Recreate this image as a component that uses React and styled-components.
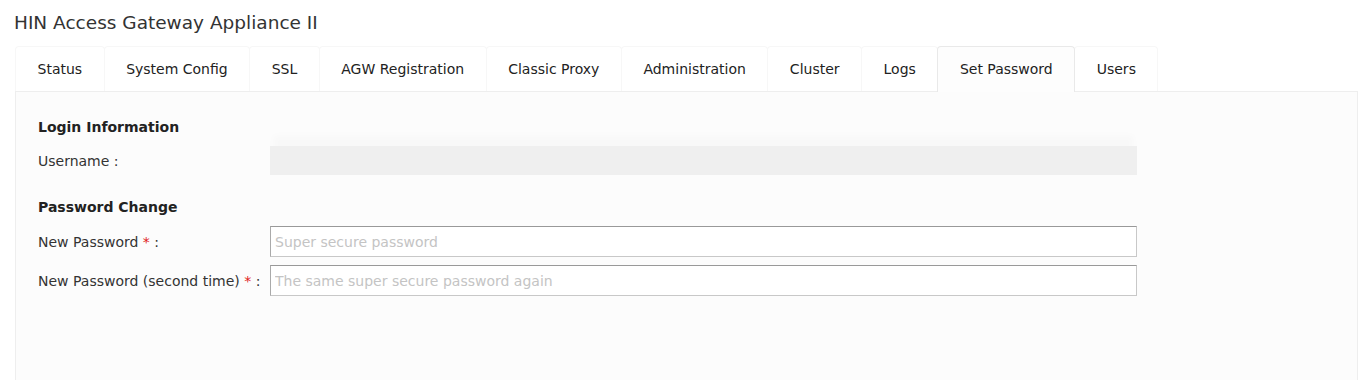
import styled, { createGlobalStyle } from 'styled-components'

const GlobalStyle = createGlobalStyle`
  body {
    margin: 0;
    background: #ffffff;
    font-family: "DejaVu Sans", Verdana, sans-serif;
    color: #333333;
  }
`

const tabs = [
  'Status',
  'System Config',
  'SSL',
  'AGW Registration',
  'Classic Proxy',
  'Administration',
  'Cluster',
  'Logs',
  'Set Password',
  'Users',
]

export default function App() {
  return (
    <>
      <GlobalStyle />
      <Page>
        <Title>HIN Access Gateway Appliance II</Title>
        <TabBar>
          {tabs.map((t) => (
            <Tab key={t} active={t === 'Set Password'}>{t}</Tab>
          ))}
        </TabBar>
        <Panel>
          <SectionTitle>Login Information</SectionTitle>
          <Row>
            <Label>Username :</Label>
            <Redacted />
          </Row>
          <SectionTitle spaced>Password Change</SectionTitle>
          <Row>
            <Label>New Password <Req>*</Req> :</Label>
            <Input type="password" placeholder="Super secure password" />
          </Row>
          <Row>
            <Label>New Password (second time) <Req>*</Req> :</Label>
            <Input type="password" placeholder="The same super secure password again" />
          </Row>
        </Panel>
      </Page>
    </>
  )
}

//------------------Styles------------------

const Page = styled.div`
  padding: 0 10px 0 15px;
`

const Title = styled.h1`
  margin: 0 0 0 -1px;
  padding-top: 12px;
  height: 46px;
  box-sizing: border-box;
  font-size: 18.5px;
  font-weight: normal;
  color: #333;
  line-height: 22px;
`

const TabBar = styled.ul`
  display: flex;
  list-style: none;
  margin: 0;
  padding: 0;
  height: 45px;
`

const Tab = styled.li`
  display: flex;
  align-items: center;
  padding: 0 21.5px;
  padding-bottom: ${({ active }) => (active ? '2px' : '0')};
  font-size: 14px;
  color: #222;
  border: 1px solid ${({ active }) => (active ? '#e9e9e9' : '#f7f7f7')};
  border-bottom: none;
  border-radius: 4px 4px 0 0;
  margin-right: -1px;
  background: ${({ active }) => (active ? '#fdfdfd' : '#ffffff')};
  position: relative;
  z-index: ${({ active }) => (active ? 1 : 0)};
  margin-bottom: ${({ active }) => (active ? '-1px' : '0')};
`

const Panel = styled.div`
  background: #fcfcfc;
  border: 1px solid #eeeeee;
  padding: 25px 22px 90px 22px;
`

const SectionTitle = styled.h2`
  margin: ${({ spaced }) => (spaced ? '22px' : '0')} 0 9px 0;
  font-size: 14px;
  line-height: 20px;
  font-weight: bold;
  color: #222;
`

const Row = styled.div`
  display: flex;
  align-items: center;
  margin-bottom: 8px;
`

const Label = styled.label`
  width: 232px;
  flex-shrink: 0;
  font-size: 14px;
  color: #333;
`

const Req = styled.span`
  color: #e02020;
`

const Redacted = styled.div`
  width: 867px;
  height: 29px;
  background: #efefef;
  box-shadow: 0 -14px 6px -4px #f8f8f8;
`

const Input = styled.input`
  box-sizing: border-box;
  width: 867px;
  height: 31px;
  padding: 0 4px;
  border: 1px solid #c8c8c8;
  border-top-color: #999;
  border-left-color: #aaa;
  background: #fff;
  font-family: "DejaVu Sans", Verdana, sans-serif;
  font-size: 14px;
  color: #333;
  outline: none;

  &::placeholder {
    color: #c4c4c4;
  }
`
